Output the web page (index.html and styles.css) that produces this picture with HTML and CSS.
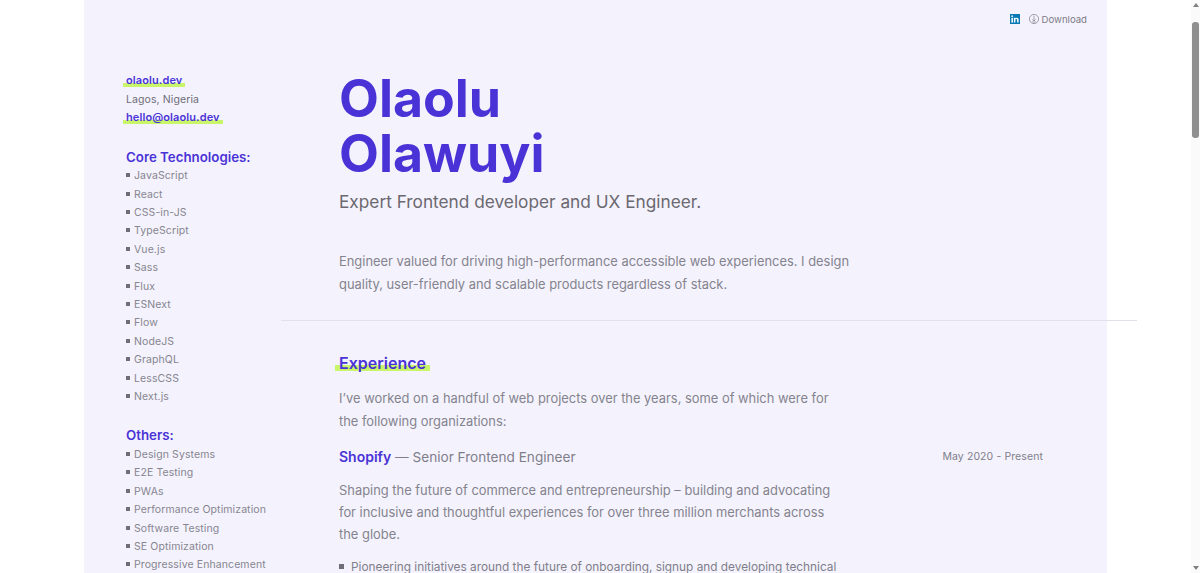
FILE: index.html
```html
<!DOCTYPE html>
<html lang="en">
<head>
<meta charset="utf-8">
<title>Olaolu Olawuyi</title>
<link rel="stylesheet" href="styles.css">
</head>
<body>
<div class="page">
  <header class="topbar">
    <a class="linkedin" href="#" aria-label="LinkedIn">
      <svg viewBox="0 0 10 10" width="10" height="10"><rect width="10" height="10" fill="#0a78b5"/><rect x="1.4" y="3.8" width="1.5" height="4.8" fill="#fff"/><circle cx="2.15" cy="2.2" r=".85" fill="#fff"/><path d="M3.9 3.8h1.4v.7c.3-.5.8-.8 1.5-.8 1.3 0 1.8.8 1.8 2.2v2.7H7.1V6.2c0-.7-.2-1.2-.8-1.2s-.9.5-.9 1.2v2.4H3.9z" fill="#fff"/></svg>
    </a>
    <a class="download" href="#">
      <svg viewBox="0 0 10 10" width="10" height="10" fill="none" stroke="#7d7b86" stroke-width=".7"><circle cx="5" cy="5" r="4.6"/><path d="M5 1.8v5M3.4 5.4 5 7l1.6-1.6M3.2 8h3.6"/></svg>
      Download
    </a>
  </header>
  <div class="layout">
    <aside class="sidebar">
      <ul class="contact">
        <li><a class="mark" href="#">olaolu.dev</a></li>
        <li class="place">Lagos, Nigeria</li>
        <li><a class="mark" href="#">hello@olaolu.dev</a></li>
      </ul>
      <h3 class="side-title">Core Technologies:</h3>
      <ul class="skills">
        <li>JavaScript</li><li>React</li><li>CSS-in-JS</li><li>TypeScript</li><li>Vue.js</li><li>Sass</li><li>Flux</li><li>ESNext</li><li>Flow</li><li>NodeJS</li><li>GraphQL</li><li>LessCSS</li><li>Next.js</li>
      </ul>
      <h3 class="side-title">Others:</h3>
      <ul class="skills">
        <li>Design Systems</li><li>E2E Testing</li><li>PWAs</li><li>Performance Optimization</li><li>Software Testing</li><li>SE Optimization</li><li>Progressive Enhancement</li>
      </ul>
    </aside>
    <main class="main">
      <section class="intro">
        <h1 class="name">Olaolu<br>Olawuyi</h1>
        <p class="role">Expert Frontend developer and UX Engineer.</p>
        <p class="text summary">Engineer valued for driving high-performance accessible web experiences. I design quality, user-friendly and scalable products regardless of stack.</p>
      </section>
      <section class="experience">
        <h2 class="section-title"><span class="mark">Experience</span></h2>
        <p class="text lead">I’ve worked on a handful of web projects over the years, some of which were for the following organizations:</p>
        <div class="job-head">
          <h3 class="job"><a href="#">Shopify</a> — Senior Frontend Engineer</h3>
          <span class="date">May 2020 - Present</span>
        </div>
        <p class="text lead job-text">Shaping the future of commerce and entrepreneurship – building and advocating for inclusive and thoughtful experiences for over three million merchants across the globe.</p>
        <ul class="points">
          <li>Pioneering initiatives around the future of onboarding, signup and developing technical solutions for merchants worldwide.</li>
        </ul>
      </section>
    </main>
  </div>
</div>
<div class="scrollbar" aria-hidden="true">
  <span class="arrow-up"></span>
  <span class="track"><span class="thumb"></span></span>
  <span class="arrow-down"></span>
</div>
</body>
</html>
```

FILE: styles.css
```css
* { box-sizing: border-box; }
html { background: #fff; height: 100%; overflow: hidden; }

body {
  margin: 0;
  height: 100%;
  overflow: hidden;
  padding-right: 9px;
  font-family: Inter, "Noto Sans", sans-serif;
  color: #807e8a;
}
a { color: inherit; text-decoration: none; }
ul { list-style: none; margin: 0; padding: 0; }
h1, h2, h3, p { margin: 0; }

.scrollbar {
  position: fixed;
  top: 0;
  right: 0;
  bottom: 0;
  width: 9px;
  display: flex;
  flex-direction: column;
  align-items: center;
  background: #fafafa;
}
.arrow-up, .arrow-down {
  flex: none;
  width: 0;
  height: 0;
  border-left: 3px solid transparent;
  border-right: 3px solid transparent;
}
.arrow-up { margin-top: 3px; border-bottom: 4px solid #7f7f7f; }
.arrow-down { margin-bottom: 3px; border-top: 4px solid #7f7f7f; }
.track { flex: 1; width: 100%; padding: 15px 1px 0; }
.thumb { display: block; width: 7px; height: 116px; margin: 0 auto; border-radius: 3px; background: #8f8f8f; }

.page {
  width: 1023px;
  min-height: 100%;
  margin: 0 auto;
  background: #f4f3fd;
}
.topbar {
  display: flex;
  justify-content: flex-end;
  align-items: center;
  gap: 9px;
  height: 38px;
  padding-right: 20px;
  font-size: 9.6px;
}
.linkedin, .download { display: flex; align-items: center; gap: 3px; color: #7d7b86; }
.layout { display: flex; padding: 33px 0 0 42px; }
.sidebar { flex: 0 0 155px; font-size: 10.5px; letter-spacing: .1px; color: #878590; }
.contact li { line-height: 18.2px; color: #6f6d78; }
.contact .place { padding-top: 1px; line-height: 17.2px; }
.mark {
  color: #4a33d6;
  font-weight: 600;
  padding: 0 3px;
  margin: 0 -3px;
  background: linear-gradient(#c9f56a, #c9f56a) no-repeat 0 100% / 100% 4px;
}
.contact .mark { font-size: 11px; letter-spacing: .1px; }
.side-title {
  margin-top: 20px;
  margin-bottom: 1.5px;
  color: #4a33d6;
  font-size: 13.3px;
  line-height: 18px;
  font-weight: 600;
  letter-spacing: 0;
}
.skills li {
  position: relative;
  padding-left: 8px;
  line-height: 18.4px;
}
.skills li::before {
  content: "";
  position: absolute;
  left: 0;
  top: 6px;
  width: 4px;
  height: 4px;
  background: #6f6d78;
}
.skills + .side-title { margin-top: 20px; }
.main { width: 856px; flex: none; }
.intro { padding: 0 0 24px 58px; border-bottom: 1px solid #e2e1ea; }
.name {
  color: #4a33d6;
  font-size: 51.8px;
  line-height: 55px;
  font-weight: 700;
}
.role {
  margin-top: 9px;
  color: #6b6870;
  font-size: 17.25px;
  line-height: 24px;
}
.text { font-size: 12.9px; line-height: 22.5px; color: #85838e; max-width: 497px; }
.summary { margin-top: 37px; max-width: 520px; }
.experience { padding: 31px 0 0 58px; }
.section-title { font-size: 16px; line-height: 22px; font-weight: 600; }
.section-title .mark {
  padding: 0 4px;
  margin: 0 -4px;
  background-size: 100% 6px;
  background-position: 0 calc(100% - 2px);
}
.lead { margin-top: 14px; }
.job-head {
  display: flex;
  justify-content: space-between;
  align-items: center;
  width: 704px;
  margin-top: 13px;
}
.job { font-size: 13.6px; line-height: 22px; font-weight: 400; }
.job a { color: #4a33d6; font-weight: 600; font-size: 14px; }
.date { font-size: 10.5px; letter-spacing: .1px; margin-bottom: 2px; }
.job-text { margin-top: 12px; line-height: 22.2px; }
.points { margin-top: 9px; max-width: 505px; }
.points li { position: relative; font-size: 11.83px; line-height: 22px; padding-left: 12px; }
.points li::before {
  content: "";
  position: absolute;
  left: 0;
  top: 8px;
  width: 5px;
  height: 5px;
  background: #6f6d78;
}
```
